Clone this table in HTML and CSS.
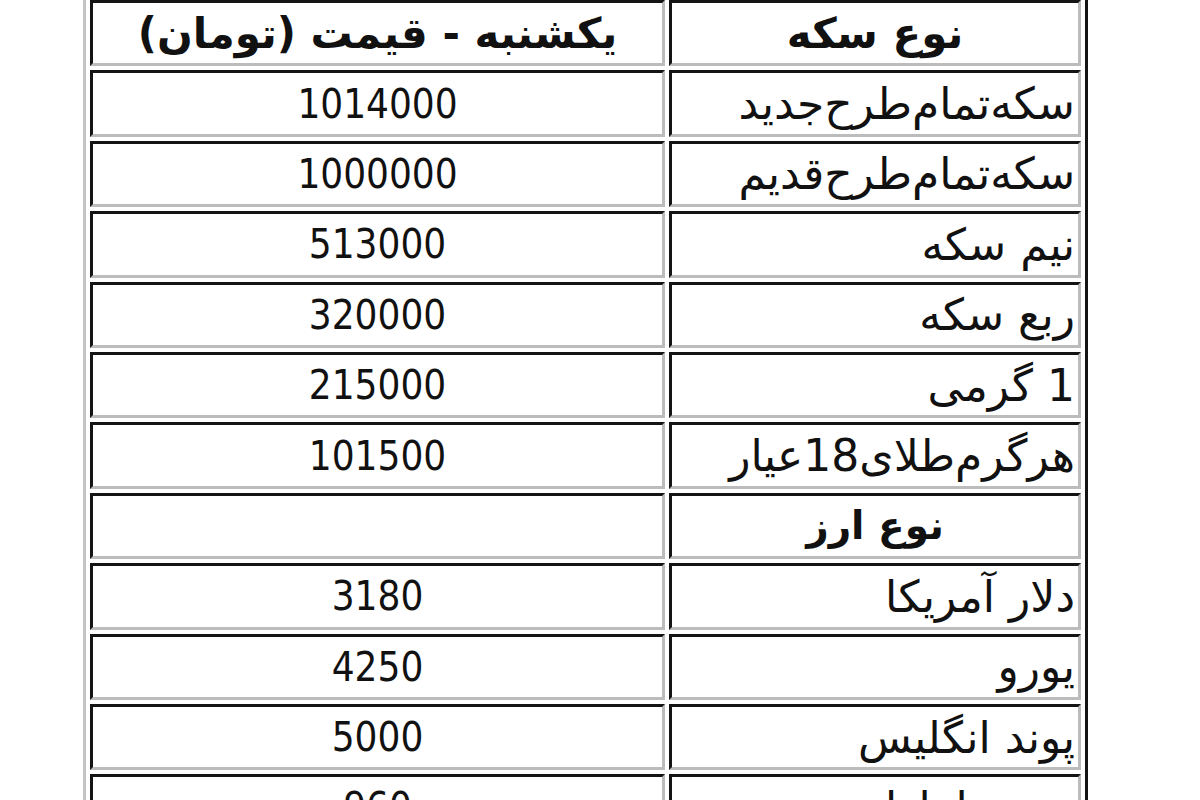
FILE: index.html
```html
<!DOCTYPE html>
<html lang="fa" dir="rtl">
<head>
<meta charset="utf-8">
<title>قیمت سکه و ارز</title>
<link rel="stylesheet" href="styles.css">
</head>
<body>
<table class="prices">
  <tr class="row">
    <th class="cell name head">نوع سکه</th>
    <th class="cell value head">یکشنبه - قیمت (تومان)</th>
  </tr>
  <tr class="row"><td class="cell name">سکه‌تمام‌طرح‌جدید</td><td class="cell value">1014000</td></tr>
  <tr class="row"><td class="cell name">سکه‌تمام‌طرح‌قدیم</td><td class="cell value">1000000</td></tr>
  <tr class="row"><td class="cell name">نیم سکه</td><td class="cell value">513000</td></tr>
  <tr class="row"><td class="cell name">ربع سکه</td><td class="cell value">320000</td></tr>
  <tr class="row"><td class="cell name">1 گرمی</td><td class="cell value">215000</td></tr>
  <tr class="row"><td class="cell name">هرگرم‌طلای18عیار</td><td class="cell value">101500</td></tr>
  <tr class="row"><td class="cell name section">نوع ارز</td><td class="cell value"></td></tr>
  <tr class="row"><td class="cell name">دلار آمریکا</td><td class="cell value">3180</td></tr>
  <tr class="row"><td class="cell name">یورو</td><td class="cell value">4250</td></tr>
  <tr class="row"><td class="cell name">پوند انگلیس</td><td class="cell value">5000</td></tr>
  <tr class="row"><td class="cell name">درهم امارات</td><td class="cell value">960</td></tr>
</table>
</body>
</html>
```

FILE: styles.css
```css
html, body {
  margin: 0;
  padding: 0;
  background: #ffffff;
}

body {
  font-family: "DejaVu Sans Condensed", "DejaVu Sans", sans-serif;
  font-size: 40px;
  color: #111111;
  overflow: hidden;
}

.prices {
  margin-top: -7px;
  margin-left: 83px;
  margin-right: auto;
  width: 1005px;
  border-collapse: separate;
  border-spacing: 4px 4px;
  border-top: 3px solid #c4c4c4;
  border-left: 3px solid #c4c4c4;
  border-right: 3px solid #141414;
  border-bottom: 3px solid #141414;
  table-layout: fixed;
}

.row {
  height: 66.4px;
}

.cell {
  border-top: 3px solid #141414;
  border-left: 3px solid #141414;
  border-bottom: 3px solid #bcbcbc;
  border-right: 3px solid #bcbcbc;
  padding: 0 3px;
  vertical-align: middle;
  font-weight: normal;
  white-space: nowrap;
  overflow: hidden;
}

.name {
  width: 400px;
  text-align: right;
  font-family: "DejaVu Sans", sans-serif;
  font-size: 44px;
}

.value {
  text-align: center;
}

.head,
.section {
  font-family: "DejaVu Sans", sans-serif;
  font-weight: bold;
  font-size: 42px;
  text-align: center;
}

.section {
  font-size: 39px;
}
```
